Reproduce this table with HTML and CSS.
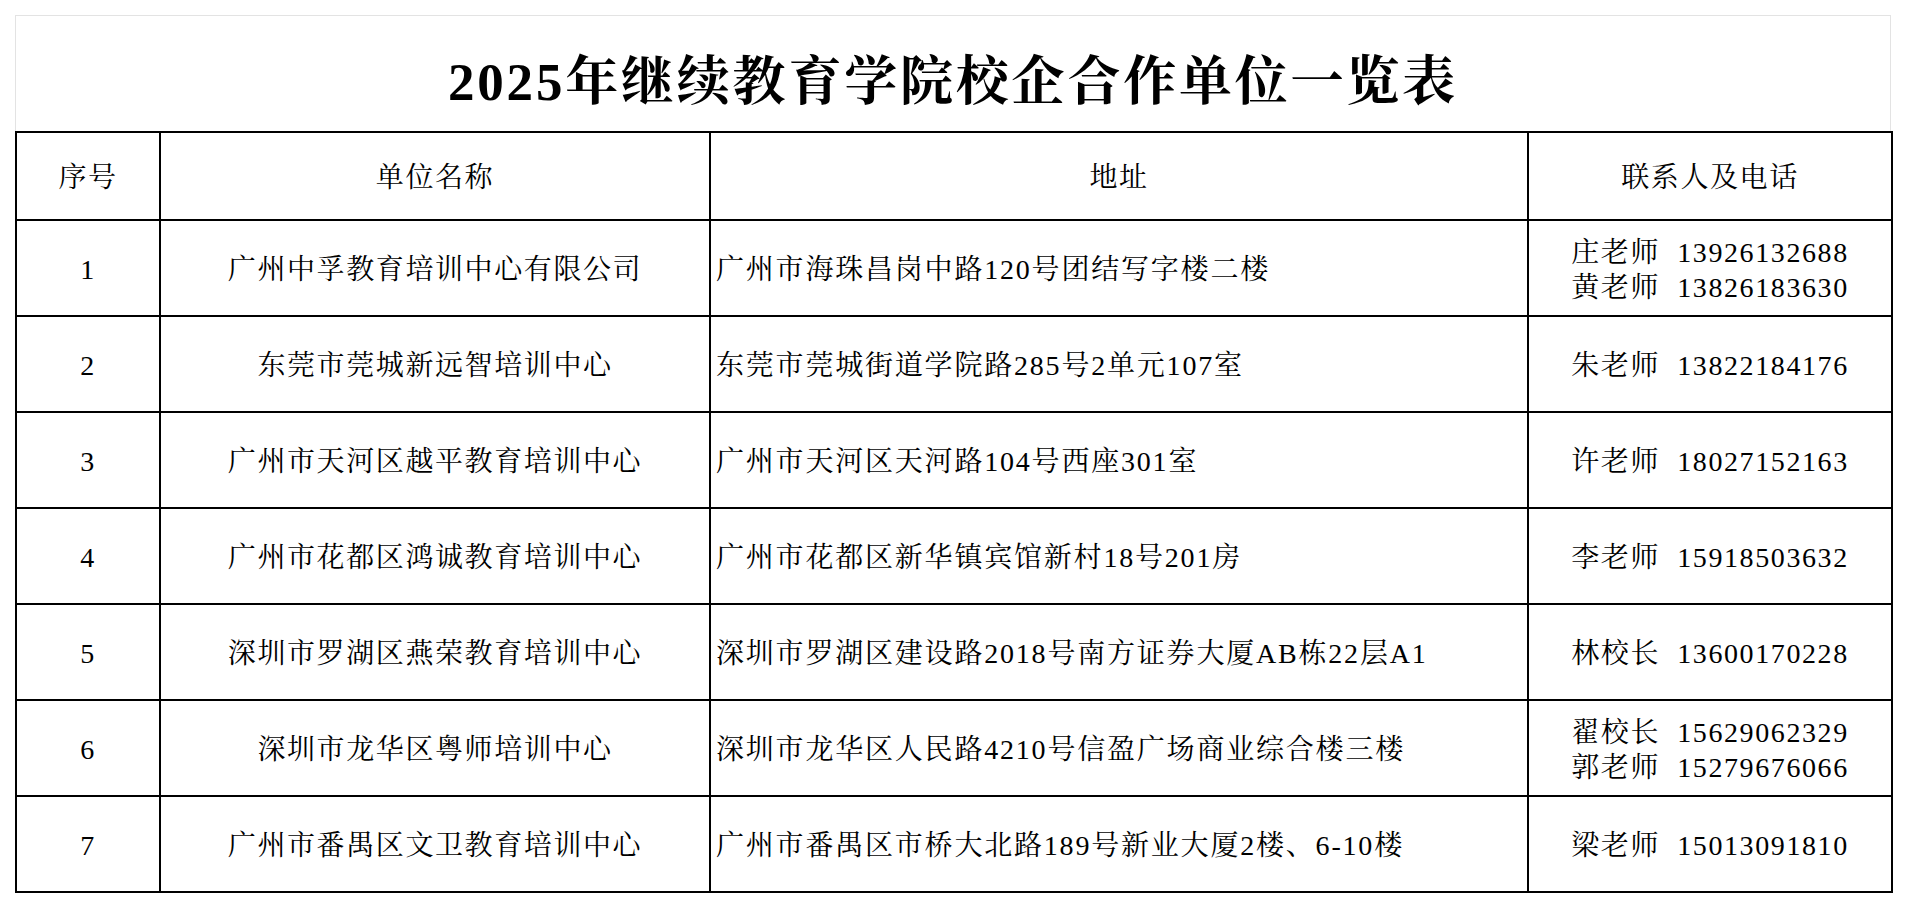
FILE: index.html
```html
<!DOCTYPE html>
<html lang="zh-CN">
<head>
<meta charset="utf-8">
<title>2025年继续教育学院校企合作单位一览表</title>
<link rel="stylesheet" href="styles.css">
</head>
<body>
<div class="sheet">
  <div class="title">2025年继续教育学院校企合作单位一览表</div>
  <table class="grid">
    <colgroup>
      <col class="c-no">
      <col class="c-name">
      <col class="c-addr">
      <col class="c-tel">
    </colgroup>
    <tr class="head">
      <td>序号</td>
      <td>单位名称</td>
      <td>地址</td>
      <td>联系人及电话</td>
    </tr>
    <tr>
      <td>1</td>
      <td>广州中孚教育培训中心有限公司</td>
      <td class="addr">广州市海珠昌岗中路120号团结写字楼二楼</td>
      <td class="tel">庄老师&nbsp; 13926132688<br>黄老师&nbsp; 13826183630</td>
    </tr>
    <tr>
      <td>2</td>
      <td>东莞市莞城新远智培训中心</td>
      <td class="addr">东莞市莞城街道学院路285号2单元107室</td>
      <td class="tel">朱老师&nbsp; 13822184176</td>
    </tr>
    <tr>
      <td>3</td>
      <td>广州市天河区越平教育培训中心</td>
      <td class="addr">广州市天河区天河路104号西座301室</td>
      <td class="tel">许老师&nbsp; 18027152163</td>
    </tr>
    <tr>
      <td>4</td>
      <td>广州市花都区鸿诚教育培训中心</td>
      <td class="addr">广州市花都区新华镇宾馆新村18号201房</td>
      <td class="tel">李老师&nbsp; 15918503632</td>
    </tr>
    <tr>
      <td>5</td>
      <td>深圳市罗湖区燕荣教育培训中心</td>
      <td class="addr">深圳市罗湖区建设路2018号南方证券大厦AB栋22层A1</td>
      <td class="tel">林校长&nbsp; 13600170228</td>
    </tr>
    <tr>
      <td>6</td>
      <td>深圳市龙华区粤师培训中心</td>
      <td class="addr">深圳市龙华区人民路4210号信盈广场商业综合楼三楼</td>
      <td class="tel">翟校长&nbsp; 15629062329<br>郭老师&nbsp; 15279676066</td>
    </tr>
    <tr>
      <td>7</td>
      <td>广州市番禺区文卫教育培训中心</td>
      <td class="addr">广州市番禺区市桥大北路189号新业大厦2楼、6-10楼</td>
      <td class="tel">梁老师&nbsp; 15013091810</td>
    </tr>
  </table>
</div>
</body>
</html>
```
FILE: styles.css
```css
html, body {
  margin: 0;
  padding: 0;
  background: #ffffff;
}

body {
  font-family: "Liberation Serif", "Noto Serif CJK SC", "Noto Sans CJK SC", serif;
  color: #000;
}

.sheet {
  margin: 15px 0 0 15px;
  width: 1876px;
}

.title {
  box-sizing: border-box;
  height: 116px;
  border: 1px solid #e3e3e3;
  border-bottom: none;
  display: flex;
  align-items: center;
  justify-content: center;
  padding-top: 6px;
  font-size: 53px;
  font-weight: bold;
  letter-spacing: 2.8px;
}

.grid {
  width: 1876px;
  border-collapse: collapse;
  table-layout: fixed;
  border: 2px solid #000;
}

.c-no { width: 144px; }
.c-name { width: 550px; }
.c-addr { width: 818px; }
.c-tel { width: 364px; }

.grid td {
  box-sizing: content-box;
  border: 2px solid #000;
  padding: 3px 0 0 0;
  height: 91px;
  text-align: center;
  vertical-align: middle;
  font-size: 28px;
  letter-spacing: 1.6px;
  line-height: 35px;
  white-space: nowrap;
}

.grid tr.head td {
  height: 83px;
}

.grid td.addr {
  text-align: left;
  padding-left: 5px;
  letter-spacing: 1.8px;
}
```
